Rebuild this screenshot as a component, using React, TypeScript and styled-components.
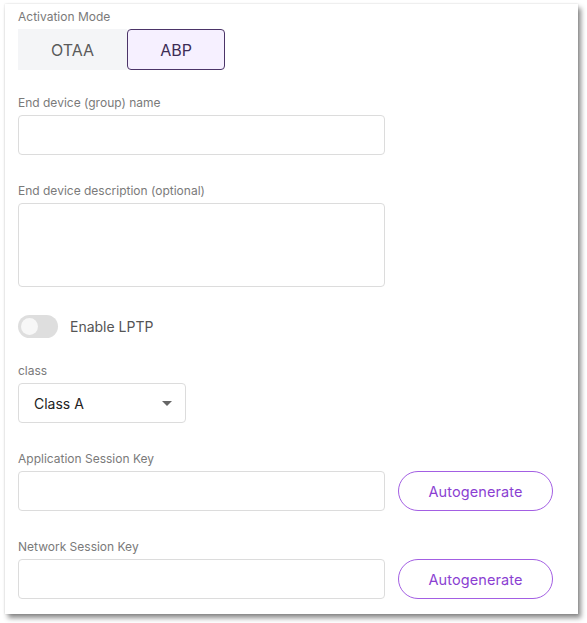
import React, { useState } from "react";
import styled, { createGlobalStyle } from "styled-components";

const GlobalStyle = createGlobalStyle`
  html, body {
    margin: 0;
    padding: 0;
    background: #ffffff;
    font-family: Inter, "Noto Sans", sans-serif;
  }
  body {
    min-height: 100vh;
  }
`;

const Card = styled.div`
  box-sizing: border-box;
  width: 573px;
  height: 610px;
  margin: 4px 0 0 5px;
  padding: 5px 13px 0;
  background: #ffffff;
  box-shadow: 0 0 2px rgba(0, 0, 0, 0.15), 3px 4px 5px rgba(0, 0, 0, 0.45);
  overflow: hidden;
`;

const Field = styled.div<{ $gap?: number }>`
  display: flex;
  flex-direction: column;
  margin-bottom: ${(p) => (p.$gap ?? 28)}px;
`;

const Label = styled.label`
  font-size: 12px;
  line-height: 16px;
  color: #7a7a7a;
  margin-bottom: 4px;
`;

const Segmented = styled.div`
  display: flex;
`;

const Segment = styled.button<{ $active?: boolean }>`
  box-sizing: border-box;
  height: 41px;
  width: ${(p) => (p.$active ? 98 : 109)}px;
  font-family: inherit;
  font-size: 16px;
  border-radius: ${(p) => (p.$active ? 4 : 0)}px;
  border: 1px solid ${(p) => (p.$active ? "#4b3468" : "transparent")};
  background: ${(p) => (p.$active ? "#f6f0ff" : "#f4f5f7")};
  color: ${(p) => (p.$active ? "#3d2c55" : "#5a5a5a")};
  cursor: pointer;
  padding: 0;
`;

const TextInput = styled.input`
  box-sizing: border-box;
  width: 367px;
  height: 40px;
  border: 1px solid #dcdcdc;
  border-radius: 4px;
  font-family: inherit;
  font-size: 14px;
  padding: 0 12px;
  outline: none;
`;

const TextArea = styled.textarea`
  box-sizing: border-box;
  width: 367px;
  height: 84px;
  border: 1px solid #dcdcdc;
  border-radius: 4px;
  font-family: inherit;
  font-size: 14px;
  padding: 10px 12px;
  resize: none;
  outline: none;
  display: block;
`;

const SwitchRow = styled.div`
  display: flex;
  align-items: center;
  gap: 12px;
  margin-bottom: 25px;
`;

const Track = styled.div`
  position: relative;
  width: 40px;
  height: 23px;
  border-radius: 12px;
  background: #dedede;
`;

const Knob = styled.span`
  position: absolute;
  left: 3px;
  top: 3px;
  width: 17px;
  height: 17px;
  border-radius: 50%;
  background: #f7f7f7;
`;

const SwitchText = styled.span`
  font-size: 14px;
  color: #555555;
`;

const Select = styled.div`
  box-sizing: border-box;
  width: 168px;
  height: 40px;
  border: 1px solid #dcdcdc;
  border-radius: 4px;
  display: flex;
  align-items: center;
  justify-content: space-between;
  padding: 0 13px 0 15px;
  font-size: 14px;
  color: #222222;
`;

const Caret = styled.span`
  width: 0;
  height: 0;
  border-left: 5px solid transparent;
  border-right: 5px solid transparent;
  border-top: 5px solid #666666;
`;

const KeyRow = styled.div`
  display: flex;
  align-items: center;
  gap: 13px;
`;

const OutlineButton = styled.button`
  box-sizing: border-box;
  width: 155px;
  height: 40px;
  border-radius: 20px;
  border: 1px solid #a35fe3;
  background: #ffffff;
  color: #8b3fd2;
  font-family: inherit;
  font-size: 14.5px;
  letter-spacing: 0.1px;
  cursor: pointer;
`;

export default function App() {
  const [mode, setMode] = useState("ABP");
  return (
    <>
      <GlobalStyle />
      <Card>
        <Field $gap={25}>
          <Label>Activation Mode</Label>
          <Segmented>
            <Segment $active={mode === "OTAA"} onClick={() => setMode("OTAA")}>
              OTAA
            </Segment>
            <Segment $active={mode === "ABP"} onClick={() => setMode("ABP")}>
              ABP
            </Segment>
          </Segmented>
        </Field>
        <Field>
          <Label>End device (group) name</Label>
          <TextInput />
        </Field>
        <Field $gap={28}>
          <Label>End device description (optional)</Label>
          <TextArea />
        </Field>
        <SwitchRow>
          <Track>
            <Knob />
          </Track>
          <SwitchText>Enable LPTP</SwitchText>
        </SwitchRow>
        <Field $gap={28}>
          <Label>class</Label>
          <Select>
            Class A
            <Caret />
          </Select>
        </Field>
        <Field>
          <Label>Application Session Key</Label>
          <KeyRow>
            <TextInput />
            <OutlineButton>Autogenerate</OutlineButton>
          </KeyRow>
        </Field>
        <Field $gap={0}>
          <Label>Network Session Key</Label>
          <KeyRow>
            <TextInput />
            <OutlineButton>Autogenerate</OutlineButton>
          </KeyRow>
        </Field>
      </Card>
    </>
  );
}
